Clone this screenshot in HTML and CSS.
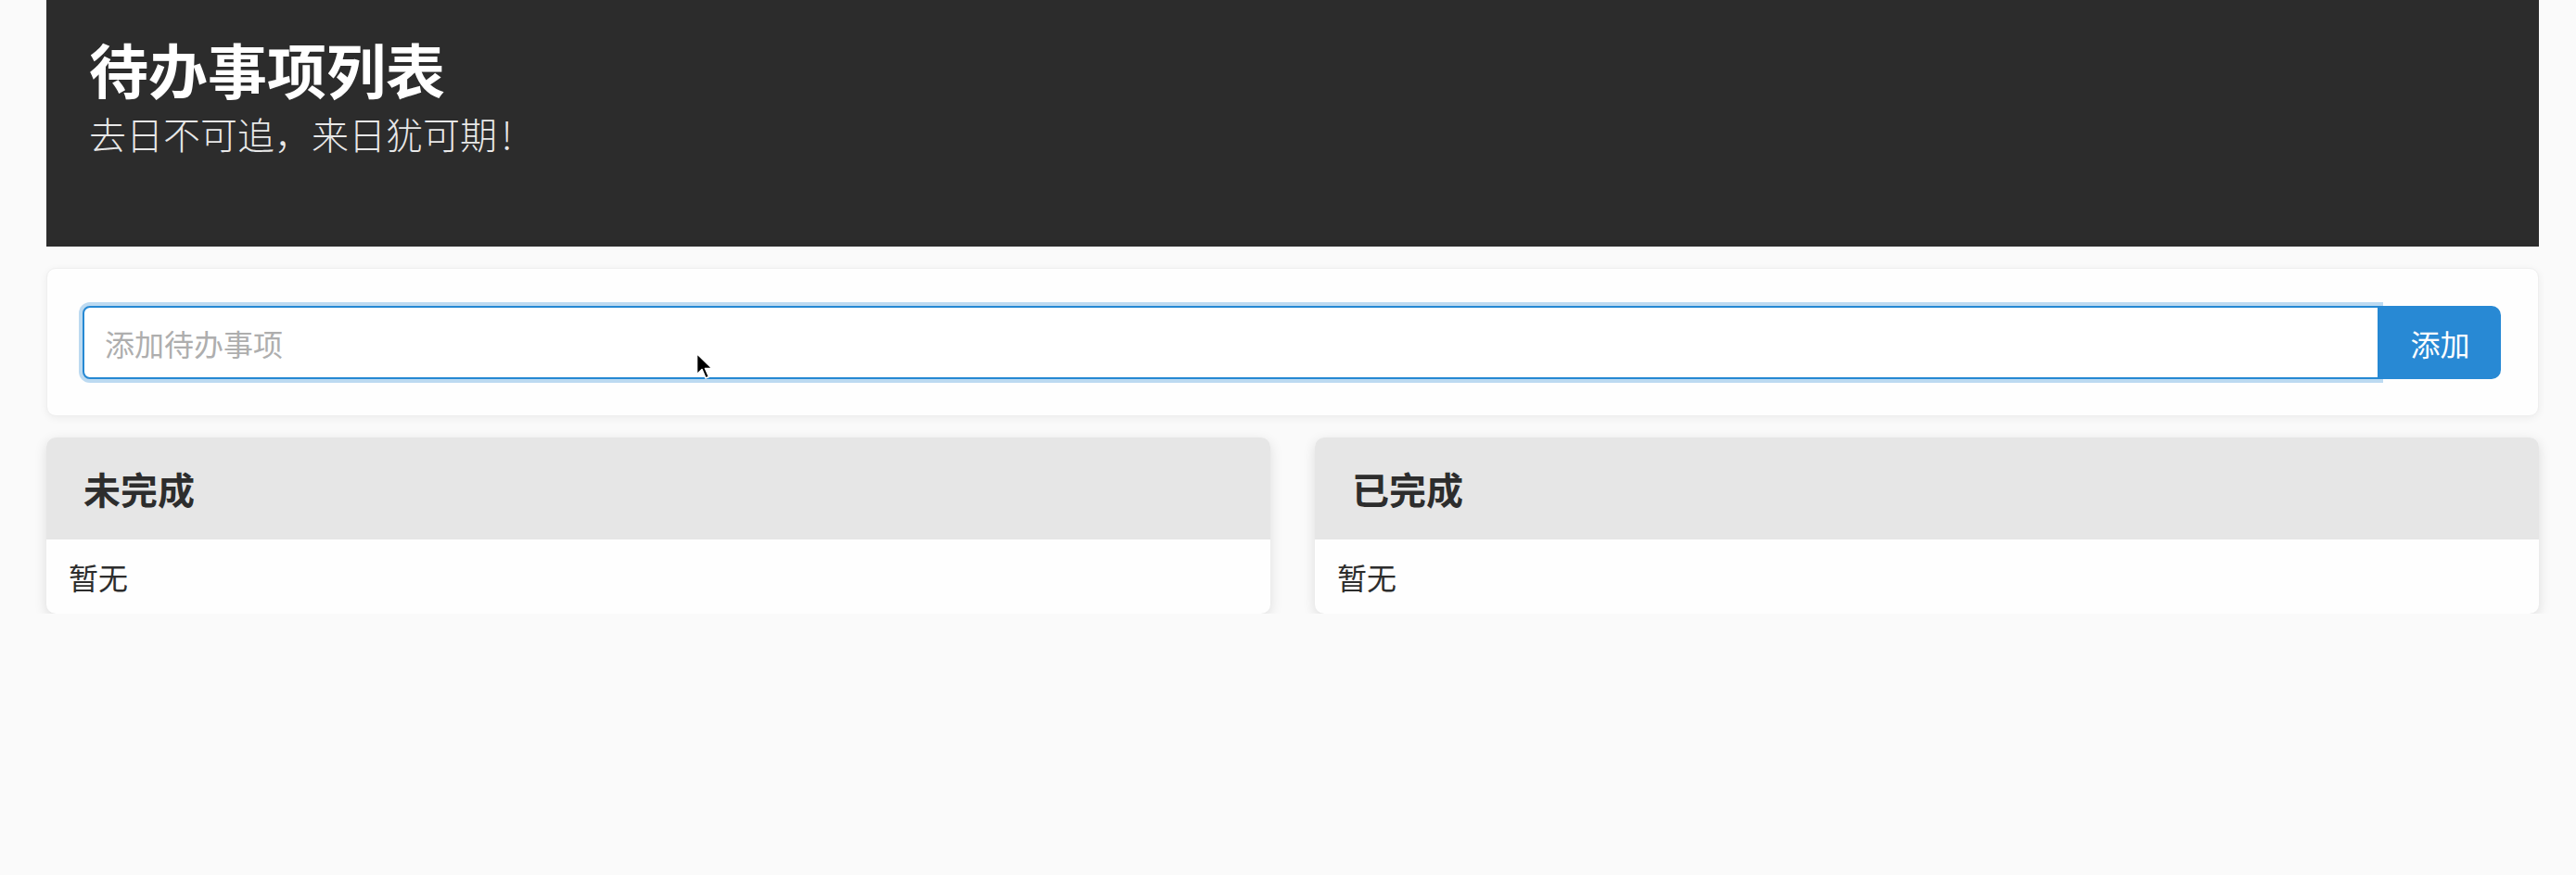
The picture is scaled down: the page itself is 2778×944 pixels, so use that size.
FILE: index.html
```html
<!DOCTYPE html>
<html lang="zh-CN">
<head>
    <meta charset="UTF-8">
    <title>待办事项列表</title>
    <link rel="stylesheet" href="styles.css">
</head>
<body>
    <div class="pagina">
        <header class="cabecalho">
            <h1 class="titulo">待办事项列表</h1>
            <p class="subtitulo">去日不可追，来日犹可期 !</p>
        </header>

        <div class="painel caixaAdicionar">
            <input type="text" class="campoTarefa" placeholder="添加待办事项">
            <button class="botaoAdicionar">添加</button>
        </div>

        <div class="listas">
            <section class="cartao">
                <h2 class="cartaoTitulo">未完成</h2>
                <div class="cartaoCorpo">暂无</div>
            </section>
            <section class="cartao">
                <h2 class="cartaoTitulo">已完成</h2>
                <div class="cartaoCorpo">暂无</div>
            </section>
        </div>
    </div>

    <!-- ponteiro do mouse que aparece na captura -->
    <svg class="ponteiro" width="22" height="32" viewBox="0 0 22 32">
        <path d="M1.5 1.5 L1.5 24 L7 18.5 L11 28 L14.5 26.5 L10.5 17.5 L18 17.5 Z" fill="#000" stroke="#fff" stroke-width="1.6" stroke-linejoin="round"/>
    </svg>
</body>
</html>
```

FILE: styles.css
```css
body {
    margin: 0;
    background-color: #fafafa;
    font-family: "Noto Sans CJK SC", "Noto Sans", sans-serif;
    color: #333;
}

.pagina {
    margin-left: 50px;
    width: 2688px;
    display: flex;
    flex-direction: column;
    gap: 23px;
}

.cabecalho {
    background-color: #2c2c2c;
    height: 266px;
    box-sizing: border-box;
    padding: 35px 46px 0;
    color: #fff;
}

.titulo {
    margin: 0;
    font-size: 64px;
    line-height: 1.2;
    font-weight: 700;
}

.subtitulo {
    margin: 8px 0 0;
    font-size: 40px;
    line-height: 1.2;
    font-weight: 300;
    color: #e8e8e8;
    word-spacing: -4px;
}

.painel {
    background-color: #fefefe;
    border: 1px solid #efefef;
    border-radius: 10px;
    box-shadow: 0 2px 8px rgba(0, 0, 0, 0.06);
}

.caixaAdicionar {
    display: flex;
    padding: 40px 40px 39px 38px;
}

.campoTarefa {
    flex: 1;
    height: 79px;
    box-sizing: border-box;
    border: 2px solid #2588d3;
    border-radius: 8px 0 0 8px;
    box-shadow: 0 0 0 4px rgba(37, 136, 211, 0.3);
    padding: 0 22px;
    font-family: inherit;
    font-size: 32px;
    color: #333;
    background-color: #fff;
    outline: none;
}

.campoTarefa::placeholder {
    color: #aeaeae;
}

.botaoAdicionar {
    width: 131px;
    height: 79px;
    border: none;
    border-radius: 0 10px 10px 0;
    background-color: #2889d4;
    color: #fff;
    font-family: inherit;
    font-size: 32px;
    cursor: pointer;
    position: relative;
}

.listas {
    display: grid;
    grid-template-columns: 1fr 1fr;
    gap: 48px;
}

.cartao {
    background-color: #fefefe;
    border-radius: 10px;
    box-shadow: 0 4px 14px rgba(0, 0, 0, 0.12);
    overflow: hidden;
}

.cartaoTitulo {
    margin: 0;
    height: 110px;
    display: flex;
    align-items: center;
    padding-left: 40px;
    background-color: #e6e6e6;
    font-size: 40px;
    font-weight: 700;
    color: #2d2d2d;
}

.cartaoCorpo {
    height: 80px;
    display: flex;
    align-items: center;
    padding-left: 24px;
    font-size: 32px;
    color: #2d2d2d;
}

.ponteiro {
    position: absolute;
    left: 750px;
    top: 380px;
}
```
